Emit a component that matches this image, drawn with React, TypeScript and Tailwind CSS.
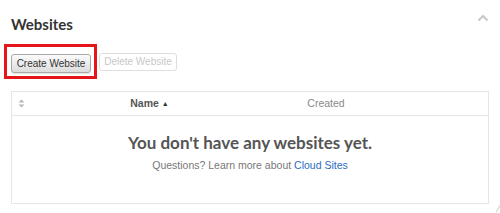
import React from 'react';

const SortIcon = () => (
  <svg width="7" height="9" viewBox="0 0 7 9" className="text-[#b5b5b5]">
    <path d="M3.5 0.5 L6.5 3.5 H0.5 Z" fill="currentColor" />
    <path d="M3.5 8.5 L6.5 5.5 H0.5 Z" fill="currentColor" />
  </svg>
);

const ChevronUp = () => (
  <svg width="12" height="8" viewBox="0 0 12 8" fill="none">
    <path d="M1.5 6.5 L6 2 L10.5 6.5" stroke="#c9c9c9" strokeWidth="2" />
  </svg>
);

export default function App() {
  return (
    <div className="relative w-[500px] h-[213px] bg-white font-['Liberation_Sans',Arial,sans-serif] text-[#333]">
      <div className="flex items-start justify-between pl-[11px] pr-[11px] pt-[14px]">
        <h2 className="font-['Lato',sans-serif] text-[15px] font-bold leading-[20px] text-[#333]">
          Websites
        </h2>
        <div className="mt-0">
          <ChevronUp />
        </div>
      </div>

      <div className="flex items-center gap-[8px] pl-[11px] pt-[16px]">
        <div className="relative">
          <button className="h-[19px] w-[80px] rounded-[3px] border border-[#a9a9a9] bg-gradient-to-b from-[#fbfbfb] to-[#dcdcdc] text-[10px] leading-[17px] text-[#333] shadow-[0_1px_1px_rgba(0,0,0,0.12)]">
            Create Website
          </button>
          <div className="pointer-events-none absolute -left-[7px] -top-[6px] -right-[6px] -bottom-[5px] border-[3px] border-[#e5161b]" />
        </div>
        <button className="h-[18px] w-[78px] rounded-[3px] border border-[#dedede] bg-white text-[10px] leading-[16px] text-[#c8c8c8]">
          Delete Website
        </button>
      </div>

      <div className="mx-[11px] mt-[17px] h-[113px] border border-[#e6e6e6] bg-white">
        <div className="flex h-[24px] items-center border-b border-[#e6e6e6] text-[10.5px]">
          <div className="flex w-[13px] justify-end">
            <SortIcon />
          </div>
          <div className="flex w-[249px] items-center justify-center gap-[3px] font-bold text-[#555]">
            Name
            <span className="text-[7px] leading-none text-[#333]">▲</span>
          </div>
          <div className="w-[96px] pl-[8px] text-center text-[#8a8a8a]">Created</div>
          <div className="flex-1" />
        </div>
        <div className="flex flex-col items-center pt-[15px]">
          <p className="font-['Lato',sans-serif] text-[17px] font-bold leading-[23px] text-[#555]">
            You don't have any websites yet.
          </p>
          <p className="mt-[4px] text-[10.5px] leading-[14px] text-[#777]">
            Questions? Learn more about <span className="text-[#2c6bbf]">Cloud Sites</span>
          </p>
        </div>
      </div>

      <div className="absolute bottom-0 right-[1px] h-[10px] w-[1px] rotate-[30deg] bg-[#d0d0d0]" />
    </div>
  );
}
